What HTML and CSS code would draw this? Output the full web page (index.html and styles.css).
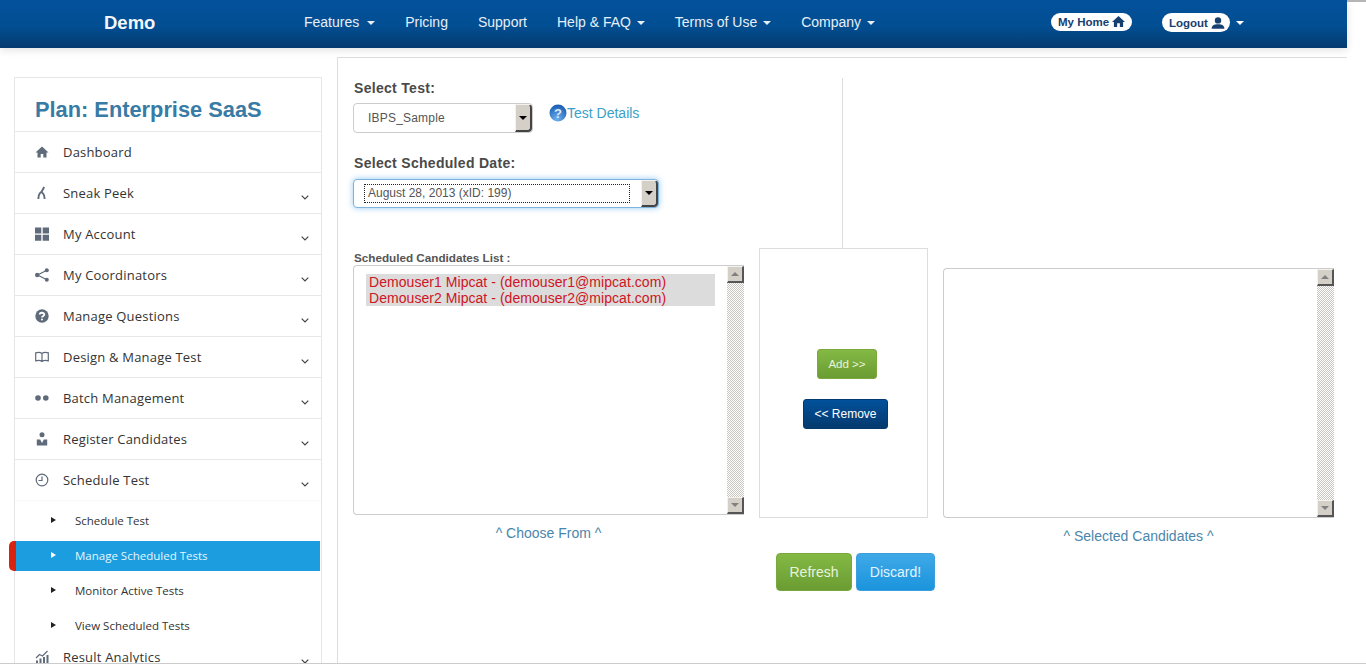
FILE: index.html
```html
<!DOCTYPE html>
<html lang="en">
<head>
  <meta charset="UTF-8" />
  <title>Manage Scheduled Tests</title>
  <link rel="stylesheet" href="styles.css">
</head>
<body>
  <div class="topbar">
    <header class="header">
      <a class="brand">Demo</a>
      <nav class="nav">
        <a>Features <i class="caret"></i></a>
        <a>Pricing</a>
        <a>Support</a>
        <a>Help &amp; FAQ <i class="caret"></i></a>
        <a>Terms of Use <i class="caret"></i></a>
        <a>Company <i class="caret"></i></a>
      </nav>
      <div class="userlinks">
        <a class="pill pill-home">My Home
          <svg viewBox="0 0 24 24" width="13" height="13"><path d="M12 2 0 13h3.500v9h6v-7h5v7h6v-9H24z"/></svg>
        </a>
        <a class="pill pill-logout">Logout
          <svg viewBox="0 0 24 24" width="14" height="14"><circle cx="12" cy="7.500" r="5.500"/><path d="M1 22c0-6 4-8 11-8s11 2 11 8z"/></svg>
        </a>
        <i class="caret caret-big"></i>
      </div>
    </header>
    <div class="topbar-rest"></div>
  </div>

  <div class="page">
    <aside class="sidebar">
      <h2 class="plan">Plan: Enterprise SaaS</h2>
      <ul class="menu">
        <li class="menu-row">
          <svg class="menu-icon" viewBox="0 0 14 14"><path d="M7 1.500 .5 7.500h2v5h3.200V9h2.600v3.500h3.200v-5h2z"/></svg>
          Dashboard
        </li>
        <li class="menu-row">
          <svg class="menu-icon" viewBox="0 0 14 14"><path class="thick" d="M9.200 1 6.200 6.500M6.200 6C3.800 7.500 3.400 10 3.400 13M6.200 6C9 7.500 9.600 10 9.600 13"/></svg>
          Sneak Peek
          <svg class="chev" viewBox="0 0 8 5"><path d="M.7.7 4 4 7.300.7"/></svg>
        </li>
        <li class="menu-row">
          <svg class="menu-icon" viewBox="0 0 14 14"><path d="M0 .5h6.300v6H0zM7.700.5H14v6H7.700zM0 7.700h6.300v6H0zM7.700 7.700H14v6H7.700z"/></svg>
          My Account
          <svg class="chev" viewBox="0 0 8 5"><path d="M.7.7 4 4 7.300.7"/></svg>
        </li>
        <li class="menu-row">
          <svg class="menu-icon" viewBox="0 0 14 14"><path class="line" d="M11.500 2.500 2.500 7l9 4.500"/><circle cx="11.800" cy="2.200" r="2"/><circle cx="2.200" cy="7" r="2.200"/><circle cx="11.800" cy="11.800" r="2"/></svg>
          My Coordinators
          <svg class="chev" viewBox="0 0 8 5"><path d="M.7.7 4 4 7.300.7"/></svg>
        </li>
        <li class="menu-row">
          <svg class="menu-icon" viewBox="0 0 14 14"><circle cx="7" cy="7" r="6.700"/><path class="cut" d="M4.700 5.500C4.800 3.200 9.300 3.200 9.300 5.400 9.300 7 7 6.800 7 8.500"/><circle class="dot" cx="7" cy="10.500" r="1"/></svg>
          Manage Questions
          <svg class="chev" viewBox="0 0 8 5"><path d="M.7.7 4 4 7.300.7"/></svg>
        </li>
        <li class="menu-row">
          <svg class="menu-icon" viewBox="0 0 14 14"><path class="outline" d="M7 3.500C5.500 2.300 3 2.300.7 2.800v8C3 10.300 5.500 10.300 7 11.500c1.500-1.200 4-1.200 6.300-.7v-8C11 2.300 8.500 2.300 7 3.500zm0 0v8"/></svg>
          Design &amp; Manage Test
          <svg class="chev" viewBox="0 0 8 5"><path d="M.7.7 4 4 7.300.7"/></svg>
        </li>
        <li class="menu-row">
          <svg class="menu-icon" viewBox="0 0 14 14"><circle cx="3" cy="7" r="2.800"/><circle cx="10.800" cy="7" r="2.800"/></svg>
          Batch Management
          <svg class="chev" viewBox="0 0 8 5"><path d="M.7.7 4 4 7.300.7"/></svg>
        </li>
        <li class="menu-row">
          <svg class="menu-icon" viewBox="0 0 14 14"><circle cx="7" cy="2.700" r="2.500"/><path d="M1.800 13.500V7.500h3.400L7 11l1.800-3.500h3.400v6z"/></svg>
          Register Candidates
          <svg class="chev" viewBox="0 0 8 5"><path d="M.7.7 4 4 7.300.7"/></svg>
        </li>
        <li class="menu-row menu-open">
          <svg class="menu-icon" viewBox="0 0 14 14"><circle class="outline" cx="7" cy="7" r="5.800"/><path class="outline" d="M7 3.500V7.500H3.500"/></svg>
          Schedule Test
          <svg class="chev" viewBox="0 0 8 5"><path d="M.7.7 4 4 7.300.7"/></svg>
        </li>
        <li>
          <ul class="submenu">
            <li class="sub-row">Schedule Test</li>
            <li class="sub-row sub-active">Manage Scheduled Tests</li>
            <li class="sub-row">Monitor Active Tests</li>
            <li class="sub-row">View Scheduled Tests</li>
          </ul>
        </li>
        <li class="menu-row menu-last">
          <svg class="menu-icon" viewBox="0 0 14 14"><path d="M1 10.500h2V14H1zM4.500 8.500h2V14h-2zM8 7h2v7H8zM11.500 5h2v9h-2z"/><path class="line" d="M1 8l3.500-3.500L7.500 6 12.500 1"/></svg>
          Result Analytics
          <svg class="chev" viewBox="0 0 8 5"><path d="M.7.7 4 4 7.300.7"/></svg>
        </li>
      </ul>
    </aside>

    <main class="content">
      <section class="filters">
        <label class="field-label field-label-first">Select Test:</label>
        <div class="field-row">
          <div class="select select-test">
            <span class="select-value">IBPS_Sample</span>
            <span class="select-btn"><i class="arrow-down"></i></span>
          </div>
          <a class="details">
            <svg viewBox="0 0 18 18" width="18" height="18">
              <defs><radialGradient id="qbg" cx="45%" cy="85%" r="80%"><stop offset="0" stop-color="#6db0ee"/><stop offset="1" stop-color="#1c5fb4"/></radialGradient></defs>
              <circle cx="9" cy="9" r="8.500" fill="url(#qbg)"/>
              <text x="9" y="14" text-anchor="middle" class="details-mark">?</text>
            </svg>Test Details
          </a>
        </div>
        <label class="field-label field-label-second">Select Scheduled Date:</label>
        <div class="select select-date">
          <span class="select-value"><span class="focus-box">August 28, 2013 (xID: 199)</span></span>
          <span class="select-btn"><i class="arrow-down"></i></span>
        </div>
      </section>

      <section class="lists">
        <div class="list-col">
          <div class="list-label">Scheduled Candidates List :</div>
          <div class="listbox">
            <div class="listbox-items">
              <div class="listbox-selected">
                <div>Demouser1 Mipcat - (demouser1@mipcat.com)</div>
                <div>Demouser2 Mipcat - (demouser2@mipcat.com)</div>
              </div>
            </div>
            <div class="scrollbar">
              <span class="scroll-btn"><i class="arrow-up"></i></span>
              <span class="scroll-btn"><i class="arrow-dim"></i></span>
            </div>
          </div>
          <div class="list-caption">^ Choose From ^</div>
        </div>

        <div class="transfer">
          <button class="btn btn-add">Add &gt;&gt;</button>
          <button class="btn btn-remove">&lt;&lt; Remove</button>
        </div>

        <div class="list-col list-col-right">
          <div class="listbox">
            <div class="listbox-items"></div>
            <div class="scrollbar">
              <span class="scroll-btn"><i class="arrow-up"></i></span>
              <span class="scroll-btn"><i class="arrow-dim"></i></span>
            </div>
          </div>
          <div class="list-caption">^ Selected Candidates ^</div>
        </div>
      </section>

      <div class="actions">
        <button class="btn btn-big btn-refresh">Refresh</button>
        <button class="btn btn-big btn-discard">Discard!</button>
      </div>
    </main>
  </div>
</body>
</html>
```

FILE: styles.css
```css
* {
  box-sizing: border-box;
}
html, body {
  margin: 0;
  height: 666px;
  overflow: hidden;
  background: #fff;
  font-family: "Liberation Sans", Arial, sans-serif;
  color: #333;
}
ul {
  list-style: none;
  margin: 0;
  padding: 0;
}

/* header */
.topbar {
  display: flex;
  position: relative;
  z-index: 2;
}
.header {
  width: 1347px;
  height: 48px;
  display: flex;
  align-items: center;
  background: linear-gradient(#02519b 0%, #024e92 55%, #053a6e 100%);
  box-shadow: 0 2px 8px rgba(0, 0, 0, .12);
  color: #e6eff8;
}
.topbar-rest {
  flex: 1;
  height: 2px;
  background: #b5b5b5;
}
.brand {
  width: 200px;
  padding-left: 104px;
  font-size: 18.500px;
  font-weight: bold;
  color: #f2f6fb;
  margin-top: -3px;
}
.nav {
  display: flex;
  gap: 30px;
  font-size: 14px;
  margin-left: 104px;
  margin-top: -4px;
}
.caret {
  display: inline-block;
  width: 0;
  height: 0;
  margin-left: 2px;
  vertical-align: 2px;
  border-left: 4.500px solid transparent;
  border-right: 4.500px solid transparent;
  border-top: 4.500px solid #e6eff8;
}
.nav a:first-child .caret {
  margin-left: 4px;
}
.userlinks {
  margin-left: auto;
  padding-right: 103px;
  display: flex;
  align-items: center;
  margin-top: -4px;
}
.pill {
  display: flex;
  align-items: center;
  gap: 3px;
  background: #fff;
  border-radius: 10px;
  color: #17406f;
  font-size: 11.500px;
  font-weight: bold;
}
.pill svg {
  fill: #17406f;
}
.pill-home {
  width: 81px;
  height: 18px;
  padding-left: 7px;
  margin-right: 30px;
  margin-top: -1px;
}
.pill-logout {
  width: 68px;
  height: 19px;
  padding-left: 7px;
  margin-top: 1px;
}
.caret-big {
  margin-left: 6px;
  margin-top: 2px;
  vertical-align: 0;
  border-top-color: #fff;
}

/* page */
.page {
  display: flex;
  height: 616px;
  overflow: hidden;
  border-bottom: 1px solid #ccc;
}
.sidebar {
  width: 308px;
  margin: 29px 15px 0 14px;
  flex: none;
  border: 1px solid #e6e6e6;
  border-bottom: 0;
}
.plan {
  margin: 0;
  height: 53px;
  padding: 20px 0 0 20px;
  font-size: 21.800px;
  line-height: 24px;
  font-weight: bold;
  color: #387ba5;
}
.menu-row {
  height: 41px;
  display: flex;
  align-items: center;
  padding: 0 12px 0 20px;
  border-top: 1px solid #e8e8e8;
  font-family: "Open Sans", sans-serif;
  font-size: 13px;
  letter-spacing: .2px;
  color: #333;
}
.menu-last {
  border-top-color: transparent;
}
.menu-open {
  box-shadow: 0 1px 2px rgba(0, 0, 0, .04);
}
.menu-icon {
  width: 14px;
  height: 14px;
  margin-right: 14px;
  flex: none;
  fill: #5f6b7a;
}
.menu-icon .line, .menu-icon .outline {
  fill: none;
  stroke: #5f6b7a;
  stroke-width: 1.200;
}
.menu-icon .thick {
  fill: none;
  stroke: #5f6b7a;
  stroke-width: 1.900;
}
.menu-icon .cut {
  fill: none;
  stroke: #fff;
  stroke-width: 1.800;
}
.menu-icon .dot {
  fill: #fff;
}
.chev {
  width: 8px;
  height: 5px;
  margin: 9px 0 0 auto;
  fill: none;
  stroke: #444;
  stroke-width: 1.200;
}
.submenu {
  padding-top: 6px;
  margin-bottom: -5px;
  display: flex;
  flex-direction: column;
  gap: 5px;
}
.sub-row {
  position: relative;
  height: 30px;
  display: flex;
  align-items: center;
  padding: 0 0 2px 60px;
  font-family: "Open Sans", sans-serif;
  font-size: 11.500px;
  color: #333;
}
.sub-row::before {
  content: "";
  position: absolute;
  left: 36px;
  top: 11px;
  border-left: 5px solid #222;
  border-top: 3.500px solid transparent;
  border-bottom: 3.500px solid transparent;
}
.sub-active {
  background: #1b9ddf;
  color: #e6f6ff;
  margin-right: 1px;
}
.sub-active::before {
  border-left-color: #fff;
}
.sub-active::after {
  content: "";
  position: absolute;
  left: -6px;
  top: 0;
  width: 7px;
  height: 30px;
  background: #d9230f;
  border-radius: 5px 0 0 5px;
}

/* main panel */
.content {
  width: 1010px;
  height: 607px;
  margin-top: 9px;
  flex: none;
  padding: 20px 0 0 15px;
  border-top: 1px solid #ddd;
  border-left: 1px solid #ddd;
}
.filters {
  width: 490px;
  height: 170px;
  border-right: 1px solid #ddd;
}
.field-label {
  display: block;
  font-size: 14px;
  line-height: 18px;
  margin-left: 1px;
  font-weight: bold;
  letter-spacing: .3px;
  color: #4a4a4a;
  margin-bottom: 7px;
}
.field-label-first {
  padding-top: 1px;
  margin-bottom: 6px;
}
.field-label-second {
  margin-top: 21px;
}
.field-row {
  display: flex;
  align-items: flex-start;
}
.select {
  display: flex;
  background: #fff;
  border: 1px solid #ccc;
  border-radius: 4px;
  font-size: 12px;
  color: #555;
}
.select-test {
  width: 180px;
  height: 30px;
  letter-spacing: .2px;
}
.select-date {
  width: 306px;
  height: 29px;
  border-color: #7eb3dd;
  box-shadow: 0 0 6px rgba(82, 168, 236, .6);
}
.select-value {
  flex: 1;
  display: flex;
  align-items: center;
  padding-left: 14px;
}
.select-date .select-value {
  padding-left: 10px;
  padding-right: 11px;
}
.focus-box {
  flex: 1;
  height: 19px;
  line-height: 17px;
  padding-left: 3px;
  border: 1px dotted #222;
}
.select-btn {
  width: 17px;
  display: flex;
  align-items: center;
  justify-content: center;
  background: #d4d0c8;
  border-top: 1px solid #f3f2ee;
  border-left: 1px solid #f3f2ee;
  border-right: 2px solid #444;
  border-bottom: 2px solid #444;
  border-radius: 0 4px 4px 0;
}
.arrow-down {
  border-left: 4px solid transparent;
  border-right: 4px solid transparent;
  border-top: 4px solid #000;
}
.arrow-up {
  border-left: 4px solid transparent;
  border-right: 4px solid transparent;
  border-bottom: 4px solid #808080;
}
.arrow-dim {
  border-left: 4px solid transparent;
  border-right: 4px solid transparent;
  border-top: 4px solid #808080;
}
.details {
  display: flex;
  align-items: center;
  margin: 1px 0 0 16px;
  font-size: 14px;
  color: #3ba0c9;
}
.details-mark {
  fill: #dbe9f8;
  font-size: 13px;
  font-weight: bold;
  font-family: "Liberation Sans", sans-serif;
}

/* candidate lists */
.lists {
  display: flex;
}
.list-col {
  width: 391px;
}
.list-col-right {
  padding-top: 20px;
}
.list-label {
  height: 17px;
  font-size: 11.700px;
  line-height: 19px;
  font-weight: bold;
  margin-left: 1px;
  color: #555;
}
.listbox {
  height: 250px;
  display: flex;
  border: 1px solid #ccc;
  border-right: 0;
  border-radius: 4px 0 0 4px;
}
.listbox-items {
  flex: 1;
  padding: 8px 12px;
}
.listbox-selected {
  background: #dcdcdc;
  font-size: 14px;
  letter-spacing: .05px;
  line-height: 16px;
  padding-left: 3px;
  color: #cf1423;
  white-space: nowrap;
}
.scrollbar {
  width: 17px;
  display: flex;
  flex-direction: column;
  justify-content: space-between;
  background: repeating-conic-gradient(#c8c5be 0 25%, #fff 0 50%) 0 0 / 2px 2px;
}
.scroll-btn {
  height: 17px;
  display: flex;
  align-items: center;
  justify-content: center;
  background: #d4d0c8;
  border-top: 1px solid #f3f2ee;
  border-left: 1px solid #f3f2ee;
  border-right: 2px solid #555;
  border-bottom: 2px solid #555;
}
.list-caption {
  margin-top: 10px;
  font-size: 14px;
  line-height: 16px;
  text-align: center;
  color: #4a86ab;
}
.transfer {
  width: 169px;
  height: 270px;
  margin: 0 15px;
  padding-top: 100px;
  display: flex;
  flex-direction: column;
  align-items: center;
  gap: 20px;
  border: 1px solid #ddd;
  flex: none;
}

/* buttons */
.btn {
  border: 1px solid transparent;
  border-radius: 3px;
  padding: 0;
  font-family: "Liberation Sans", sans-serif;
  font-size: 12px;
  color: #e8f3dc;
}
.btn-add {
  width: 60px;
  height: 30px;
  margin-left: 7px;
  font-size: 11.500px;
  background: linear-gradient(#83b944, #6b9c33);
  border-color: #79a83e;
}
.btn-remove {
  width: 85px;
  height: 30px;
  margin-left: 4px;
  background: linear-gradient(#02519b, #053a6e);
  border-color: #053a6e;
  color: #fff;
}
.actions {
  display: flex;
  gap: 4px;
  margin: 9px 0 0 423px;
}
.btn-big {
  height: 38px;
  font-size: 14px;
  border-radius: 4px;
}
.btn-refresh {
  width: 76px;
  background: linear-gradient(#83b944, #6b9c33);
  border-color: #79a83e;
}
.btn-discard {
  width: 79px;
  background: linear-gradient(#3fa9e8, #1b94dc);
  border-color: #3a9fdc;
  color: #e4f4ff;
}
```
